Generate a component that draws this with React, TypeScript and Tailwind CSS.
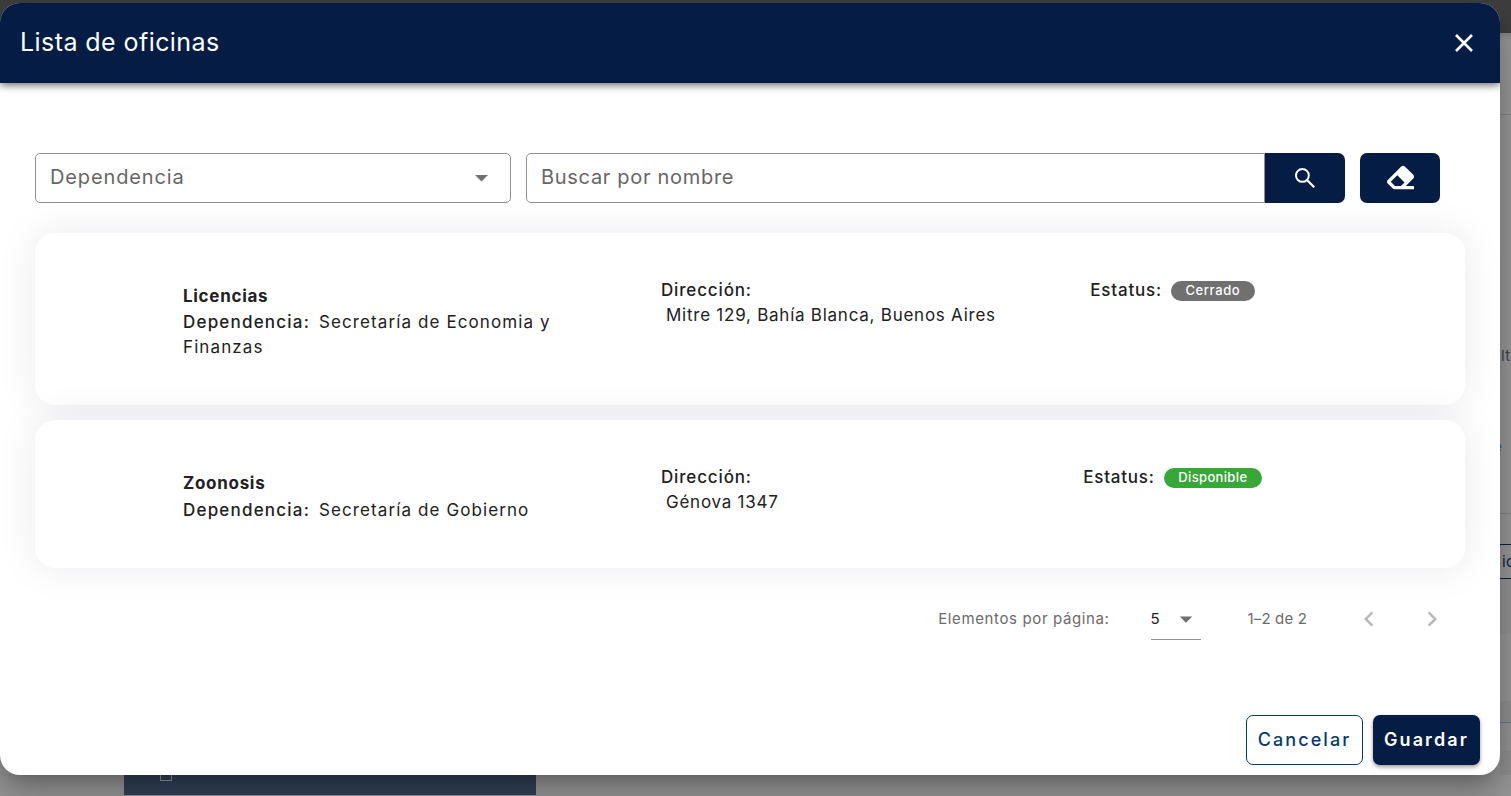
import { useState } from 'react'
import { FaEraser } from 'react-icons/fa'
import { MdArrowDropDown, MdChevronLeft, MdChevronRight } from 'react-icons/md'

type Office = {
  id: number
  name: string
  department: string
  address: string
  status: 'Cerrado' | 'Disponible'
}

const offices: Office[] = [
  {
    id: 1,
    name: 'Licencias',
    department: 'Secretaría de Economia y Finanzas',
    address: 'Mitre 129, Bahía Blanca, Buenos Aires',
    status: 'Cerrado'
  },
  {
    id: 2,
    name: 'Zoonosis',
    department: 'Secretaría de Gobierno',
    address: 'Génova 1347',
    status: 'Disponible'
  }
]

// Page that stays visible behind the dialog
function PageBehind() {
  return (
    <div className="flex h-full flex-col bg-[#999]">
      <div className="h-[33px] shrink-0 bg-[#3f3f3f]" />
      <div className="flex h-[742px] shrink-0 justify-end">
        <div className="flex w-[11px] flex-col overflow-hidden whitespace-nowrap text-[15px] leading-5">
          <div className="h-[82px] shrink-0 border-b border-[#848484] bg-linear-to-b from-[#858585] via-[#999] via-10% to-[#999]" />
          <div className="h-[231px] shrink-0" />
          <p className="h-5 shrink-0 pl-px tracking-[0.5px] text-[#3c4654]">lt</p>
          <div className="h-[71px] shrink-0" />
          <p className="-ml-[7px] h-5 shrink-0 text-[#33476d]">e</p>
          <div className="h-[57px] shrink-0 border-b border-[#848484]" />
          <div className="h-[30px] shrink-0" />
          <p className="h-[35px] shrink-0 border-y border-[#0d2547] pl-0.5 leading-[33px] tracking-wide text-[#0d2547]">ic</p>
          <div className="h-[55px] shrink-0 bg-[#949494]" />
          <div className="h-[67px] shrink-0" />
          <div className="h-[22px] shrink-0 border-b border-[#6b7499] bg-[#929292]" />
          <div className="h-[28px] shrink-0 bg-[#969696]" />
          <div className="grow bg-[#919191]" />
        </div>
      </div>
      <div className="flex grow pl-[124px]">
        <div className="h-5 w-[412px] bg-[#334259] pl-9">
          <div className="h-[6px] w-3 border border-t-0 border-[#999]" />
        </div>
      </div>
    </div>
  )
}

function CloseIcon() {
  return (
    <svg viewBox="0 0 18 18" className="size-[18px]" fill="none" stroke="currentColor" strokeWidth="2.6">
      <path d="M1 1l16 16M17 1L1 17" />
    </svg>
  )
}

function SearchIcon() {
  return (
    <svg viewBox="0 0 20 20" className="size-5" fill="none" stroke="currentColor" strokeWidth="2">
      <circle cx="7.4" cy="7.4" r="6.4" />
      <path d="M12 12l7.3 7.3" strokeWidth="2.2" />
    </svg>
  )
}

function Status({ value }: { value: Office['status'] }) {
  return (
    <span
      className={`flex h-5 items-center rounded-full px-[14.5px] text-[13px] font-medium text-white ${
        value === 'Disponible' ? 'bg-[#37a737] tracking-[0.35px]' : 'bg-[#707070] tracking-[0.6px]'
      }`}
    >
      {value}
    </span>
  )
}

function OfficeCard({ office }: { office: Office }) {
  return (
    <article className="flex rounded-[20px] bg-white pt-[45px] pb-[45px] pl-[148px] text-[17px] leading-[25px] text-[#212121] shadow-[0_0_40px_rgba(8,11,62,0.085)]">
      <div className="w-[478px] pt-[5px] pr-[90px] tracking-[1.1px]">
        <h2 className="leading-[27.4px] font-bold tracking-[0.7px]">{office.name}</h2>
        <p>
          <span className="mr-[9px] font-medium tracking-[1.2px]">Dependencia:</span>
          {office.department}
        </p>
      </div>
      <div className="w-[370px] tracking-[0.75px]">
        <p className="font-medium tracking-[0.85px]">Dirección:</p>
        <p className="pl-[5px]">{office.address}</p>
      </div>
      <div className="flex h-[25px] w-[283px] items-center justify-center gap-[9px]">
        <span className="font-medium tracking-[0.8px]">Estatus:</span>
        <Status value={office.status} />
      </div>
    </article>
  )
}

export default function App() {
  const [search, setSearch] = useState('')

  return (
    <div className="relative h-[796px] w-[1511px] overflow-hidden font-['Inter','Open_Sans',sans-serif]">
      <PageBehind />

      <section className="absolute top-[3px] left-0 flex h-[772px] w-[1500px] flex-col overflow-hidden rounded-[20px] bg-white shadow-[0_11px_15px_-7px_rgba(0,0,0,0.2),0_24px_38px_3px_rgba(0,0,0,0.14),0_9px_46px_8px_rgba(0,0,0,0.12)]">
        <header className="relative flex h-20 shrink-0 items-center justify-between bg-[#051d45] px-5 text-white shadow-[0_2px_8px_rgba(0,0,0,0.6)]">
          <h1 className="text-[25px] tracking-[0.43px]">Lista de oficinas</h1>
          <button aria-label="Cerrar" className="mr-[7px]">
            <CloseIcon />
          </button>
        </header>

        <main className="px-[35px] pt-[70px]">
          <div className="flex h-[50px] gap-[15px] pr-[25px] text-[20px] text-[#666]">
            <button className="flex w-[476px] items-center justify-between rounded-[5px] border border-[#919191] pr-[13px] pb-0.5 pl-[14px] tracking-[0.87px]">
              Dependencia
              <MdArrowDropDown className="size-[31px] text-[#707070]" />
            </button>
            <div className="flex grow">
              <input
                value={search}
                onChange={(event) => setSearch(event.target.value)}
                placeholder="Buscar por nombre"
                className="w-0 grow rounded-l-[5px] border border-[#919191] px-[14px] pb-0.5 tracking-[0.7px] outline-none placeholder:text-[#666]"
              />
              <button aria-label="Buscar" className="flex w-20 items-center justify-center rounded-r-[7px] bg-[#051d45] text-white">
                <SearchIcon />
              </button>
            </div>
            <button aria-label="Limpiar" className="flex w-20 items-center justify-center rounded-[7px] bg-[#051d45] pb-px text-white">
              <FaEraser className="size-[27px]" />
            </button>
          </div>

          <div className="mt-[30px] flex flex-col gap-[15px]">
            {offices.map((office) => (
              <OfficeCard key={office.id} office={office} />
            ))}
          </div>

          <div className="mt-8 flex h-10 items-center justify-end pr-[18px] pb-px text-[15px] text-[#6b6b6b]">
            <span className="tracking-[0.62px]">Elementos por página:</span>
            <button className="mt-px ml-[41px] flex h-10 w-[50px] items-center justify-between border-b border-[#919191] text-[#212121]">
              5
              <MdArrowDropDown className="size-[30px] text-[#707070]" />
            </button>
            <span className="ml-[47px] tracking-[0.15px]">1–2 de 2</span>
            <MdChevronLeft className="ml-[47px] size-[30px] text-[#b8b8b8]" />
            <MdChevronRight className="ml-[33px] size-[30px] text-[#b8b8b8]" />
          </div>
        </main>

        <footer className="mt-auto flex justify-end gap-2.5 pr-5 pb-2.5 text-[18px]">
          <button className="h-[50px] w-[117px] rounded-[7px] border border-[#06396d] pb-0.5 font-medium tracking-[2.1px] text-[#06396d]">
            Cancelar
          </button>
          <button className="h-[50px] w-[107px] rounded-[7px] bg-[#051d45] pb-0.5 font-semibold tracking-[2.1px] text-white shadow-[0_2px_4px_rgba(0,0,0,0.4)]">
            Guardar
          </button>
        </footer>
      </section>
    </div>
  )
}
